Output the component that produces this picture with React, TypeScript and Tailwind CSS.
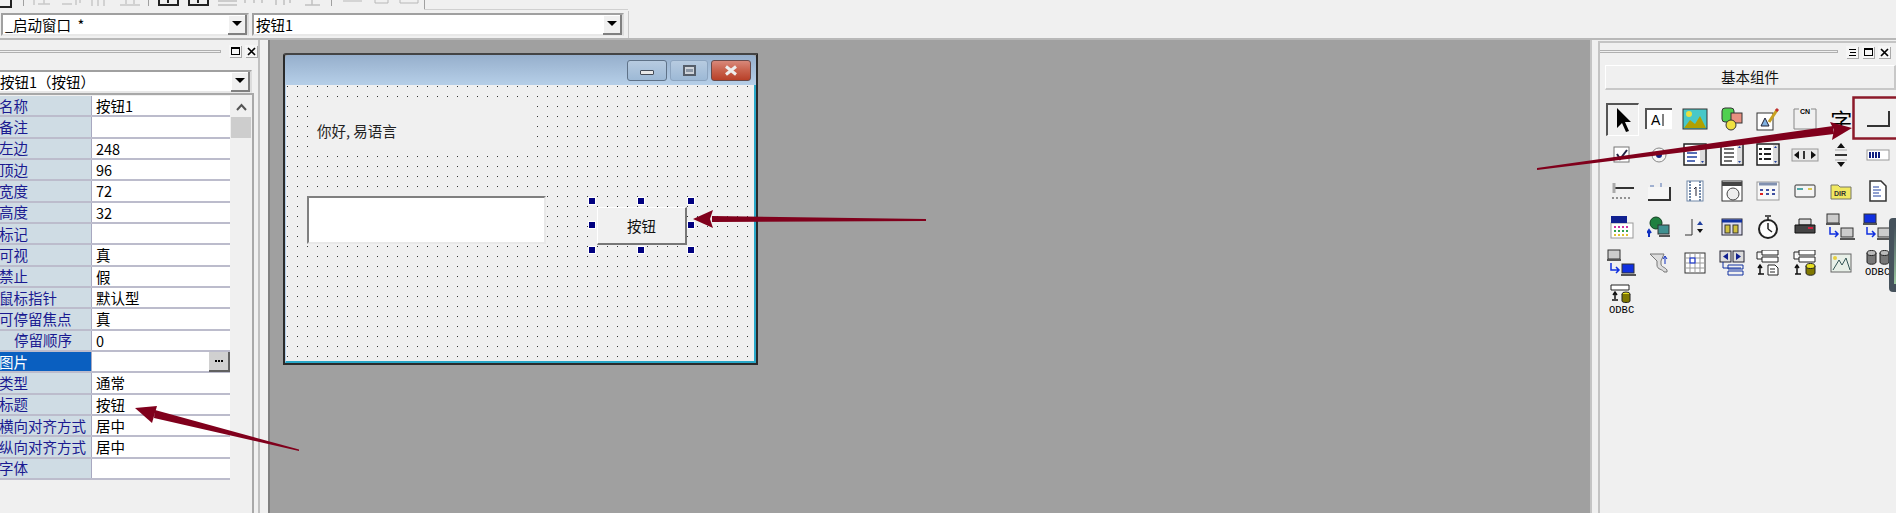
import type { ReactNode } from "react";

const CJK = "font-['Noto_Sans_CJK_SC','Noto_Sans',sans-serif]";

const rows: { label: string; value?: string; indent?: boolean; selected?: boolean }[] = [
  { label: "名称", value: "按钮1" },
  { label: "备注" },
  { label: "左边", value: "248" },
  { label: "顶边", value: "96" },
  { label: "宽度", value: "72" },
  { label: "高度", value: "32" },
  { label: "标记" },
  { label: "可视", value: "真" },
  { label: "禁止", value: "假" },
  { label: "鼠标指针", value: "默认型" },
  { label: "可停留焦点", value: "真" },
  { label: "停留顺序", value: "0", indent: true },
  { label: "图片", selected: true },
  { label: "类型", value: "通常" },
  { label: "标题", value: "按钮" },
  { label: "横向对齐方式", value: "居中" },
  { label: "纵向对齐方式", value: "居中" },
  { label: "字体" },
];

function ComboArrow() {
  return (
    <div className="flex h-[20px] w-[19px] shrink-0 items-center justify-center border-r-2 border-b-2 border-[#808080] bg-[#f0f0f0] shadow-[inset_1px_1px_0_#fff]">
      <div className="h-0 w-0 border-x-[5px] border-t-[5px] border-x-transparent border-t-black" />
    </div>
  );
}

function Combo({ text, className }: { text: string; className: string }) {
  return (
    <div className={`flex h-[23px] items-center border-2 border-[#a0a0a0] border-r-[#dcdcdc] border-b-[#e8e8e8] bg-white ${className}`}>
      <span className="flex-1 overflow-hidden pl-[2px] text-[14.5px] leading-[19px] whitespace-pre text-black">{text}</span>
      <ComboArrow />
    </div>
  );
}

function PanelButton({ children }: { children: ReactNode }) {
  return (
    <div className="flex h-[12px] w-[12px] items-center justify-center bg-[#f6f6f6] shadow-[1px_1px_0_#a8a8a8]">
      {children}
    </div>
  );
}

const MaxGlyph = () => <div className="h-[8px] w-[9px] border border-t-2 border-black" />;
const CloseGlyph = () => (
  <svg width="9" height="9" viewBox="0 0 9 9">
    <path d="M1 1l7 7M8 1L1 8" stroke="#000" strokeWidth="1.7" />
  </svg>
);
const MenuGlyph = () => (
  <svg width="9" height="9" viewBox="0 0 9 9">
    <path d="M1 1.5h7M2 4.5h6M1 7.5h7" stroke="#000" />
  </svg>
);

function PropertyRow({ label, value, indent, selected }: (typeof rows)[number]) {
  return (
    <div className="flex h-[21.33px] border-b-2 border-[#bcbccc]">
      <div
        className={`flex w-[91px] shrink-0 items-center overflow-hidden text-[14.5px] whitespace-nowrap ${
          selected ? "bg-[#0a5fc0] text-white" : "bg-[#cfdce4] text-[#1a1a90]"
        } ${indent ? "pl-[14px]" : ""}`}
      >
        <span className={indent ? "" : "-ml-[1px]"}>{label}</span>
      </div>
      <div className="w-[1px] shrink-0 bg-[#a8a8c0]" />
      <div className="relative flex-1 bg-white pl-[4px] text-[14.5px] leading-[19px] text-black">
        {value}
        {selected && (
          <div className="absolute top-0 right-0 flex h-[20px] w-[21px] items-center justify-center gap-[1px] border-r-2 border-b-2 border-[#606060] bg-[#d0d0d0]">
            <div className="h-[2px] w-[2px] bg-black" />
            <div className="h-[2px] w-[2px] bg-black" />
            <div className="h-[2px] w-[2px] bg-black" />
          </div>
        )}
      </div>
    </div>
  );
}

function LeftPanel() {
  return (
    <aside className="flex h-full w-[260px] shrink-0 flex-col border-r-2 border-[#c0c0c0] bg-[#f0f0f0]">
      <div className="flex h-[30px] items-start pt-[5px]">
        <div className="mt-[5px] h-[3px] flex-1 border-t border-r border-b border-[#b0b0b0]" />
        <div className="ml-[8px] flex gap-[4px]">
          <PanelButton><MaxGlyph /></PanelButton>
          <PanelButton><CloseGlyph /></PanelButton>
        </div>
        <div className="w-[1px]" />
      </div>
      <Combo text="按钮1（按钮）" className="mr-[6px] border-l-0 [&>span]:pl-0" />
      <div className="mr-[4px] flex-1 border-t-2 border-r-2 border-[#a8a8a8] pt-[1px] pr-[1px]">
        <div className="flex">
          <div className="w-[230px] shrink-0">
            {rows.map((row) => (
              <PropertyRow key={row.label} {...row} />
            ))}
          </div>
          <div className="ml-[1px] flex h-[372px] flex-1 flex-col items-center bg-[#f0f0f0]">
            <svg width="11" height="21" viewBox="0 0 11 21" className="shrink-0">
              <path d="M1 14l4.500-5 4.500 5" fill="none" stroke="#555" strokeWidth="2" />
            </svg>
            <div className="h-[21px] w-full bg-[#cdcdcd]" />
          </div>
        </div>
      </div>
    </aside>
  );
}

function FormWindow() {
  return (
    <div className="w-[475px] shrink-0 rounded-tl-[3px] border-2 border-[#2a2a2a] border-t-[#444]">
      <div className="flex h-[30px] items-start justify-end gap-[3px] rounded-t-[4px] bg-gradient-to-b from-[#96afcc] to-[#b6cfe8] pt-[5px] pr-[5px]">
        <div className="flex h-[21px] w-[40px] items-center justify-center rounded-[3px] border border-[#5f7288] bg-gradient-to-b from-[#b7cbe0] to-[#9db9d6] pt-[4px]">
          <div className="h-[5px] w-[14px] rounded-[1px] border border-[#444c58] bg-[#e8e8e8]" />
        </div>
        <div className="flex h-[21px] w-[38px] items-center justify-center rounded-[3px] border border-[#8ca4bf] bg-gradient-to-b from-[#b7cbe0] to-[#9db9d6]">
          <div className="flex h-[11px] w-[13px] items-center justify-center border-2 border-[#555e6a] bg-[#cfd4da]">
            <div className="h-[3px] w-[7px] bg-[#8b97a6]" />
          </div>
        </div>
        <div className="flex h-[21px] w-[40px] items-center justify-center rounded-[3px] border border-[#6a4a4a] bg-gradient-to-b from-[#d8887a] via-[#c8614c] to-[#b84028]">
          <svg width="14" height="11" viewBox="0 0 14 11">
            <path d="M2 1.500l10 8M12 1.500l-10 8" stroke="#eee" strokeWidth="3" />
          </svg>
        </div>
      </div>
      <div className="relative h-[278px] border-r-2 border-b-2 border-l border-r-[#2aa8c8] border-b-[#2aa8c8] border-l-[#b6cfe8] bg-[#f0f0f0] bg-[radial-gradient(circle_at_1.5px_1.5px,#333_0.8px,transparent_0.9px)] bg-[length:10px_10px]">
        <div className="absolute top-[15px] left-[24px] flex h-[52px] w-[225px] items-center bg-[#f0f0f0] pt-[10px] pl-[7px] text-[14.5px] text-[#222]">
          你好, 易语言
        </div>
        <div className="absolute top-[111px] left-[21px] h-[48px] w-[239px] border-2 border-[#808080] border-r-[#e8e8e8] border-b-[#e8e8e8] bg-white" />
        <div className="absolute top-[122px] left-[311px] flex h-[38px] w-[90px] items-center justify-center border-t border-l border-[#fff] border-r-2 border-b-2 border-r-[#777] border-b-[#777] bg-[#f0f0f0] text-[14.5px] text-[#111]">
          按钮
        </div>
        {[
          "top-[113px] left-[303px]",
          "top-[113px] left-[352px]",
          "top-[113px] left-[402px]",
          "top-[137px] left-[303px]",
          "top-[137px] left-[402px]",
          "top-[162px] left-[303px]",
          "top-[162px] left-[352px]",
          "top-[162px] left-[402px]",
        ].map((pos) => (
          <div key={pos} className={`absolute h-[6px] w-[6px] bg-[#000080] shadow-[0_0_0_1px_#fff] ${pos}`} />
        ))}
      </div>
    </div>
  );
}

function ListIcon({ lines, boxes }: { lines: string; boxes?: boolean }) {
  return (
    <svg width="24" height="24" viewBox="0 0 24 24">
      <rect x="1" y="1" width="22" height="21" fill="#fff" stroke="#222" strokeWidth="1.500" />
      <rect x="17" y="2" width="5" height="19" fill="#ddd" />
      <path d="M18 5h3l-1.500-2zM18 18h3l-1.500 2z" fill="#2040a0" />
      {boxes ? (
        <path d="M3 6h3M3 11h3M3 16h3M8 6h7M8 11h7M8 16h7" stroke={lines} strokeWidth="2" />
      ) : (
        <path d="M4 6h10M4 10h10M4 14h10M4 18h8" stroke={lines} strokeWidth="1.500" />
      )}
    </svg>
  );
}

function LinkIcon({ first, second }: { first: string; second: string }) {
  return (
    <svg width="30" height="28" viewBox="0 0 30 28">
      <rect x="1" y="1" width="12" height="9" fill={first} stroke="#333" />
      <path d="M0 11h14" stroke="#555" strokeWidth="2" />
      <path d="M4 14v7h7M9 18l3 3-3 3" fill="none" stroke="#1030e0" strokeWidth="1.500" />
      <rect x="15" y="15" width="12" height="9" fill={second} stroke="#333" />
      <path d="M14 26h15" stroke="#555" strokeWidth="2" />
    </svg>
  );
}

function DataIcon({ tail }: { tail: "doc" | "db" }) {
  return (
    <svg width="24" height="26" viewBox="0 0 24 26">
      <path d="M1 2h5M6 0h16v5H6zM1 2v7h5M6 7h16v5H6z" fill="#fff" stroke="#222" />
      <path d="M4 24v-8M2 18l2-3 2 3M2 24h6" fill="none" stroke="#111" strokeWidth="1.500" />
      {tail === "doc" ? (
        <path d="M12 15h7l3 3v7H12zM14 19h5M14 22h5" fill="#fff" stroke="#222" />
      ) : (
        <g>
          <path d="M13 16v7c0 3 9 3 9 0v-7" fill="#807800" stroke="#222" />
          <ellipse cx="17.500" cy="16" rx="4.500" ry="2.500" fill="#e8e020" stroke="#222" />
        </g>
      )}
    </svg>
  );
}

function OdbcIcon() {
  return (
    <svg width="26" height="28" viewBox="0 0 26 28">
      <path d="M2 4v9c0 3 9 3 9 0V4z" fill="#777" stroke="#222" />
      <ellipse cx="6.500" cy="4" rx="4.500" ry="2.500" fill="#bbb" stroke="#222" />
      <path d="M15 4v9c0 3 9 3 9 0V4z" fill="#777" stroke="#222" />
      <ellipse cx="19.500" cy="4" rx="4.500" ry="2.500" fill="#bbb" stroke="#222" />
      <text x="0" y="26" fontSize="10.500" fontFamily="Liberation Mono">ODBC</text>
    </svg>
  );
}

const iconCells: ReactNode[] = [
  <svg key="cursor" width="26" height="32" viewBox="0 0 26 32"><path d="M7 4v20l5-5 4 9 3-1-4-9h6z" fill="#000" /></svg>,
  <svg key="edit" width="28" height="24" viewBox="0 0 28 24"><rect x="1" y="2" width="26" height="20" fill="#fff" /><path d="M1 22V2h26" fill="none" stroke="#555" strokeWidth="2" /><text x="6" y="18" fontSize="14" fontFamily="Liberation Sans">A</text><path d="M18 7v12" stroke="#000" /></svg>,
  <svg key="pic" width="26" height="22" viewBox="0 0 26 22"><rect x="1" y="1" width="24" height="20" fill="#48c8c8" stroke="#333" /><circle cx="7" cy="6" r="3" fill="#e8e040" /><path d="M2 20l6-8 5 4 5-8 6 12z" fill="#b0a000" /></svg>,
  <svg key="shape" width="24" height="24" viewBox="0 0 24 24"><rect x="2" y="1" width="12" height="14" rx="3" fill="#50d050" stroke="#333" /><rect x="11" y="6" width="11" height="10" fill="#e89080" stroke="#333" /><circle cx="11" cy="18" r="5" fill="#f0e040" stroke="#333" /></svg>,
  <svg key="draw" width="24" height="24" viewBox="0 0 24 24"><rect x="1" y="6" width="16" height="17" fill="#fff" stroke="#333" /><path d="M5 19l4-8 4 8z" fill="#80b0e0" stroke="#223" /><path d="M13 15l8-12" stroke="#c8a020" strokeWidth="3" /><path d="M20 4l2-2" stroke="#c03030" strokeWidth="3" /></svg>,
  <svg key="cn" width="24" height="24" viewBox="0 0 24 24"><path d="M6 2H1v20h22V2h-5" fill="none" stroke="#888" /><text x="7" y="7" fontSize="7" fontFamily="Liberation Sans" fontWeight="700">CN</text></svg>,
  <span key="zi" className="text-[22px] leading-none">字</span>,
  <svg key="btn" width="24" height="18" viewBox="0 0 24 18"><path d="M23 1v15H1" fill="none" stroke="#333" strokeWidth="2" /></svg>,
  <svg key="check" width="20" height="20" viewBox="0 0 20 20"><rect x="2" y="2" width="15" height="15" fill="#fff" stroke="#777" /><path d="M5 9l3 5 7-9" fill="none" stroke="#224" strokeWidth="2" /></svg>,
  <svg key="radio" width="20" height="20" viewBox="0 0 20 20"><circle cx="10" cy="10" r="7" fill="#f4f4f4" stroke="#888" /><circle cx="10" cy="10" r="3" fill="#102080" /></svg>,
  <ListIcon key="l1" lines="#2040a0" />,
  <ListIcon key="l2" lines="#444" />,
  <ListIcon key="l3" lines="#222" boxes />,
  <svg key="hs" width="28" height="14" viewBox="0 0 28 14"><rect x="1" y="1" width="26" height="12" fill="#e8e8e8" stroke="#999" /><path d="M8 3v8L3 7zM20 3v8l5-4z" fill="#111" /><path d="M13 3v8" stroke="#333" strokeWidth="2" /></svg>,
  <svg key="vs" width="14" height="28" viewBox="0 0 14 28"><path d="M3 7l4-5 4 5zM3 21l4 5 4-5z" fill="#111" /><path d="M1 14h12" stroke="#333" strokeWidth="2" /><path d="M1 9h12M1 19h12" stroke="#aaa" /></svg>,
  <svg key="prog" width="24" height="12" viewBox="0 0 24 12"><rect x="1" y="1" width="22" height="10" fill="#fff" stroke="#999" /><path d="M4 3v6M7 3v6M10 3v6M13 3v6" stroke="#102080" strokeWidth="2" /></svg>,
  <svg key="slider" width="24" height="20" viewBox="0 0 24 20"><path d="M4 7h20" stroke="#333" strokeWidth="2" /><path d="M4 2v10" stroke="#aaa" strokeWidth="3" /><path d="M2 17h20" stroke="#333" strokeDasharray="2 2" /></svg>,
  <svg key="tab" width="24" height="20" viewBox="0 0 24 20"><path d="M1 6h22v13H1z" fill="#f6f6f6" /><path d="M23 6v13H1" fill="none" stroke="#333" strokeWidth="2" /><path d="M3 5h4M14 2v4" stroke="#5070b0" /></svg>,
  <svg key="film" width="18" height="22" viewBox="0 0 18 22"><rect x="1" y="1" width="16" height="20" fill="#fff" stroke="#7088a8" /><path d="M4 1v20M14 1v20" stroke="#7088a8" strokeDasharray="2 1" strokeWidth="2" /><path d="M8 9l2-2v9" fill="none" stroke="#223" /></svg>,
  <svg key="dlg" width="22" height="22" viewBox="0 0 22 22"><rect x="1" y="1" width="20" height="20" fill="#fff" stroke="#333" /><path d="M1 2h20v4H1z" fill="#444" /><circle cx="12" cy="14" r="6" fill="#eee" stroke="#444" /></svg>,
  <svg key="cal" width="24" height="20" viewBox="0 0 24 20"><rect x="1" y="1" width="22" height="18" fill="#f8f8f8" stroke="#999" /><path d="M3 3h18" stroke="#8090b0" strokeWidth="3" /><path d="M4 9h3M10 9h3M16 9h3M10 13h3M16 13h3" stroke="#4050a0" strokeWidth="2" /><path d="M4 13h3" stroke="#e02020" strokeWidth="2" /></svg>,
  <svg key="card" width="22" height="14" viewBox="0 0 22 14"><rect x="1" y="1" width="20" height="12" rx="1" fill="#f4f4f4" stroke="#333" /><path d="M3 5h6" stroke="#50a8a8" strokeWidth="2" /><path d="M14 5h4" stroke="#d8c850" strokeWidth="2" /></svg>,
  <svg key="dir" width="22" height="18" viewBox="0 0 22 18"><path d="M1 3h7l2 2h11v12H1z" fill="#f0e860" stroke="#776" /><text x="4" y="14" fontSize="7" fontFamily="Liberation Sans" fontWeight="700" fill="#333">DIR</text></svg>,
  <svg key="doc" width="18" height="22" viewBox="0 0 18 22"><path d="M1 1h11l5 5v15H1z" fill="#fff" stroke="#333" strokeWidth="1.500" /><path d="M4 7h6M4 10h8M4 13h6M4 16h8" stroke="#2040a0" /></svg>,
  <svg key="pal" width="24" height="24" viewBox="0 0 24 24"><rect x="1" y="8" width="22" height="15" fill="#fff" stroke="#999" /><rect x="1" y="1" width="16" height="7" fill="#102090" /><path d="M4 12h2M8 12h2M12 12h2M16 12h2" stroke="#d030a0" strokeWidth="2" /><path d="M4 16h2M8 16h2M12 16h2M16 16h2" stroke="#30a050" strokeWidth="2" /><path d="M4 20h2M8 20h2M12 20h2M16 20h2" stroke="#e0c030" strokeWidth="2" /></svg>,
  <svg key="net" width="24" height="24" viewBox="0 0 24 24"><circle cx="9" cy="8" r="6" fill="#208040" stroke="#104020" /><rect x="11" y="10" width="11" height="9" fill="#409090" stroke="#333" /><path d="M12 21h11" stroke="#555" strokeWidth="2" /><path d="M2 22v-6M0 18l2-3 2 3" fill="none" stroke="#1030c0" strokeWidth="2" /></svg>,
  <svg key="spin" width="22" height="20" viewBox="0 0 22 20"><path d="M8 2v16H1" fill="none" stroke="#333" /><path d="M13 8l3-4 3 4z" fill="#2040a0" /><path d="M13 12l3 4 3-4z" fill="#111" /></svg>,
  <svg key="win" width="22" height="18" viewBox="0 0 22 18"><rect x="1" y="1" width="20" height="16" fill="#dde" stroke="#223" /><path d="M1 3h20" stroke="#1030a0" strokeWidth="3" /><rect x="4" y="7" width="5" height="8" fill="#d0c040" stroke="#333" /><rect x="12" y="7" width="5" height="8" fill="#d0c040" stroke="#333" /></svg>,
  <svg key="clock" width="24" height="26" viewBox="0 0 24 26"><circle cx="12" cy="15" r="9" fill="#fff" stroke="#222" strokeWidth="2" /><path d="M9 2h6M12 3v3M12 15V9M12 15l4 3" stroke="#222" strokeWidth="1.500" /></svg>,
  <svg key="print" width="24" height="18" viewBox="0 0 24 18"><path d="M6 1h12v6H6z" fill="#ddd" stroke="#222" /><path d="M2 7h20v8H2z" fill="#444" stroke="#111" /><path d="M15 10h5" stroke="#d02040" strokeWidth="2" /></svg>,
  <LinkIcon key="link1" first="#ccc" second="#ccc" />,
  <LinkIcon key="link2" first="#1030e0" second="#ccc" />,
  <LinkIcon key="link3" first="#ccc" second="#1030e0" />,
  <svg key="port" width="22" height="22" viewBox="0 0 22 22"><path d="M2 2h14l-3 7v3c0 3 4 3 6 6v2h-3c-1-3-7-2-7-7V9z" fill="#ddd" stroke="#777" /><path d="M17 12V5M15 7l2-3 2 3" fill="none" stroke="#1030c0" /></svg>,
  <svg key="grid" width="22" height="22" viewBox="0 0 22 22"><rect x="1" y="1" width="20" height="20" fill="#fff" stroke="#333" /><path d="M1 6h20M1 11h20M1 16h20M6 1v20M11 1v20M16 1v20" stroke="#999" /><rect x="6" y="6" width="5" height="5" fill="none" stroke="#1030e0" /></svg>,
  <svg key="nav" width="26" height="26" viewBox="0 0 26 26"><rect x="1" y="1" width="11" height="11" fill="#ddd" stroke="#223" /><rect x="14" y="1" width="11" height="11" fill="#ddd" stroke="#223" /><path d="M9 3v7L4 6.500zM17 3v7l5-3.500z" fill="#102090" /><path d="M4 12v6h18M9 15h15v4H9zM9 21h15v4H9z" fill="none" stroke="#1030a0" /></svg>,
  <DataIcon key="data1" tail="doc" />,
  <DataIcon key="data2" tail="db" />,
  <svg key="report" width="22" height="20" viewBox="0 0 22 20"><rect x="1" y="1" width="20" height="18" fill="#e8f0e8" stroke="#666" /><path d="M3 17l6-10 3 5 4-7 4 12" fill="none" stroke="#355" /><circle cx="5" cy="5" r="2" fill="#e8d040" /></svg>,
  <OdbcIcon key="odbc1" />,
  <svg key="odbc2" width="26" height="32" viewBox="0 0 26 32"><path d="M2 2h18v5H2z" fill="#fff" stroke="#222" /><path d="M6 16v-6M4 12l2-3 2 3M3 17h6" fill="none" stroke="#111" strokeWidth="1.500" /><ellipse cx="17" cy="11" rx="4" ry="2" fill="#e8e020" stroke="#222" /><path d="M13 11v7c0 2 8 2 8 0v-7" fill="#807800" stroke="#222" /><text x="0" y="30" fontSize="10.500" fontFamily="Liberation Mono">ODBC</text></svg>,
];

function RightPanel() {
  return (
    <aside className="flex h-full w-[306px] shrink-0 border-l-2 border-[#c4c4c4] bg-[#f0f0f0]">
      <div className="mt-[1px] ml-[6px] flex-1 border-t-2 border-l-2 border-[#c4c4c4]">
        <div className="flex h-[22px] items-start gap-[8px] pt-[3px] pr-[6px]">
          <div className="mt-[4px] h-[3px] flex-1 border-t border-r border-b border-[#b0b0b0]" />
          <div className="flex gap-[4px]">
            <PanelButton><MenuGlyph /></PanelButton>
            <PanelButton><MaxGlyph /></PanelButton>
            <PanelButton><CloseGlyph /></PanelButton>
          </div>
        </div>
        <div className="ml-[5px] flex h-[25px] items-center justify-center border-t border-l border-[#fff] border-r-2 border-b-2 border-r-[#c8c8c8] border-b-[#c8c8c8] text-[14.5px] text-[#111]">
          基本组件
        </div>
        <div className="mt-[11px] ml-[4px] grid auto-rows-[36px] grid-cols-[repeat(8,36.500px)] items-center justify-items-center">
          {iconCells.map((icon, i) => (
            <div
              key={i}
              className={`flex h-[33px] w-[33px] items-center justify-center ${
                i === 0 ? "border-t-2 border-r border-b border-l-2 border-[#555] border-r-white border-b-white" : ""
              }`}
            >
              {icon}
            </div>
          ))}
        </div>
      </div>
    </aside>
  );
}

// only the bottom few pixels of the top toolbar are on screen
function ToolbarStrip() {
  return (
    <svg width="640" height="11" viewBox="0 0 640 11" className="block shrink-0">
      <path d="M0 7h11V0" fill="none" stroke="#222" strokeWidth="2" />
      <path d="M23.500 0v6M148.500 0v6M331.500 0v6M424.500 0v9" stroke="#a0a0a0" />
      <path d="M34 0v5M38 4h12M44 0v4M62 4h10M76 0v5M80 0v3M92 0v6M98 0v6M104 0v6M120 5h20M126 0v4M134 0v4" fill="none" stroke="#c8c8c8" strokeWidth="1.500" />
      <path d="M159 0v5h19V0M189 0v5h19V0" fill="none" stroke="#222" strokeWidth="2" />
      <path d="M168 0v3M198 0v3" stroke="#222" strokeWidth="2" />
      <path d="M218 1h19M218 5h19M245 0v3M254 0v3M262 0v3M276 0v5M284 0v5M290 0v3M305 5h15M312 0v5" stroke="#c0c0c0" strokeWidth="1.500" />
      <path d="M343 1h19M375 0v3h13V0M400 0v3h18V0" fill="none" stroke="#b8b8b8" />
      <path d="M424 9.500h204" stroke="#d0d0d0" />
    </svg>
  );
}

function Arrows() {
  return (
    <svg className="pointer-events-none absolute inset-0" width="1896" height="513" viewBox="0 0 1896 513">
      <path d="M299 449.500 L299 451 L154 418 L155 410 Z" fill="#80001c" />
      <path d="M135 408 L157 406 L152 423 Z" fill="#80001c" />
      <path d="M926 219 L926 221 L712 222 L712 216 Z" fill="#80001c" />
      <path d="M693 219 L713 210 L710 219 L713 228 Z" fill="#80001c" />
      <path d="M1537 168 L1537 170 L1834 134 L1833 126 Z" fill="#80001c" />
      <path d="M1852 128 L1830 122 L1834 130 L1832 140 Z" fill="#80001c" />
      <rect x="1853.500" y="97.500" width="44" height="41" fill="none" stroke="#8c1a2a" strokeWidth="2.500" />
    </svg>
  );
}

export default function App() {
  return (
    <div className={`relative flex h-[513px] w-[1896px] flex-col overflow-hidden bg-[#f0f0f0] ${CJK}`}>
      <ToolbarStrip />
      <div className="flex h-[27px] items-center gap-[3px] pl-[1px]">
        <Combo text="_启动窗口  *" className="w-[248px]" />
        <Combo text="按钮1" className="w-[372px]" />
        <div className="ml-[1px] h-[27px] w-[1px] bg-[#c8c8c8]" />
      </div>
      <div className="flex min-h-0 flex-1 border-t-2 border-[#b8b8b8]">
        <LeftPanel />
        <div className="ml-[8px] flex-1 border-l-2 border-[#808080] bg-[#a0a0a0] pt-[13px] pl-[13px]">
          <FormWindow />
        </div>
        <RightPanel />
      </div>
      <div className="absolute top-[218px] right-0 flex h-[74px] w-[7px] justify-end rounded-l-[4px] bg-[#46525c] py-[8px]">
        <div className="h-full w-[2px] bg-gradient-to-b from-[#46525c] to-[#9cc8a0]" />
      </div>
      <Arrows />
    </div>
  );
}
